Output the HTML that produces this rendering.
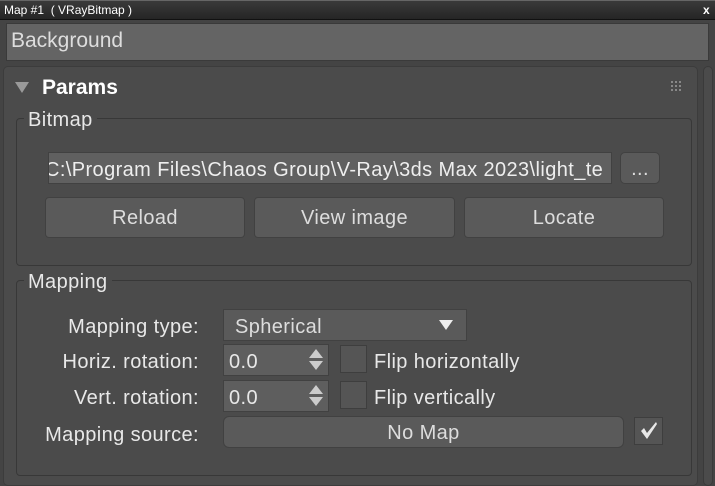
<!DOCTYPE html>
<html><head><style>
*{margin:0;padding:0;box-sizing:border-box}
body{width:715px;height:480px;background:#444;font-family:"Liberation Sans",sans-serif;color:#e8e8e8;position:relative;overflow:hidden}
.a{position:absolute}
.t{font-size:20px;letter-spacing:0.4px;white-space:nowrap;line-height:22px}
.btn{position:absolute;background:#5a5a5a;border:1px solid #414141;border-radius:4px;color:#ddd;font-size:20px;letter-spacing:0.4px;display:flex;align-items:center;justify-content:center;padding-top:2px}
.fld{position:absolute;background:#5e5e5e;border:1px solid #414141}
.grp{position:absolute;border:1px solid #383838;border-radius:4px}
.lbl{position:absolute;background:#4b4b4b;padding:0 4px}
.r{text-align:right;width:200px}
</style></head><body>
<div class="a" style="left:0;top:0;width:715px;height:20px;background:linear-gradient(#3a3a3a,#252525);border-top:1px solid #666;border-bottom:1px solid #111"></div>
<div class="a" style="left:4px;top:3px;font-size:12px;color:#fff;letter-spacing:0px">Map #1&nbsp; ( VRayBitmap )</div>
<div class="a" style="left:703px;top:3px;font-size:12px;color:#fff;font-weight:bold">x</div>
<div class="a" style="left:6px;top:23px;width:703px;height:38px;background:#646464;border:1px solid #3a3a3a"></div>
<div class="a t" style="left:11px;top:30px;font-size:21px;color:#ddd;letter-spacing:0">Background</div>
<div class="a" style="left:3px;top:66px;width:695px;height:420px;background:#4b4b4b;border:1px solid #3c3c3c;border-radius:5px"></div>
<div class="a" style="left:703px;top:66px;width:10px;height:420px;background:#4b4b4b;border:1px solid #3a3a3a;border-radius:5px"></div>
<svg class="a" style="left:15px;top:82px" width="14" height="12"><polygon points="0,0 14,0 7,11" fill="#9a9a9a"/></svg>
<div class="a" style="left:42px;top:76px;font-size:21px;font-weight:bold;color:#fff">Params</div>
<svg class="a" style="left:671px;top:81px" width="12" height="12" fill="#888"><rect x="0" y="0" width="2" height="2"/><rect x="4" y="0" width="2" height="2"/><rect x="8" y="0" width="2" height="2"/><rect x="0" y="4" width="2" height="2"/><rect x="4" y="4" width="2" height="2"/><rect x="8" y="4" width="2" height="2"/><rect x="0" y="8" width="2" height="2"/><rect x="4" y="8" width="2" height="2"/><rect x="8" y="8" width="2" height="2"/></svg>

<div class="grp" style="left:16px;top:118px;width:676px;height:148px"></div>
<div class="lbl t" style="left:24px;top:109px">Bitmap</div>
<div class="fld" style="left:48px;top:152px;width:564px;height:32px;background:#606060;overflow:hidden"><div class="t" style="position:absolute;left:-4px;top:6px;color:#eee">C:\Program Files\Chaos Group\V-Ray\3ds Max 2023\light_te</div></div>
<div class="btn" style="left:620px;top:152px;width:40px;height:32px;border-radius:5px">...</div>
<div class="btn" style="left:45px;top:197px;width:200px;height:41px">Reload</div>
<div class="btn" style="left:254px;top:197px;width:201px;height:41px">View image</div>
<div class="btn" style="left:464px;top:197px;width:200px;height:41px">Locate</div>

<div class="grp" style="left:16px;top:280px;width:676px;height:196px"></div>
<div class="lbl t" style="left:24px;top:271px">Mapping</div>
<div class="a t r" style="left:-1px;top:316px">Mapping type:</div>
<div class="fld" style="left:223px;top:309px;width:244px;height:32px;background:#5a5a5a"></div>
<div class="a t" style="left:235px;top:316px;color:#ddd">Spherical</div>
<svg class="a" style="left:439px;top:320px" width="14" height="11"><polygon points="0,0 14,0 7,10" fill="#eee"/></svg>

<div class="a t r" style="left:-1px;top:351px">Horiz. rotation:</div>
<div class="fld" style="left:223px;top:344px;width:106px;height:32px"></div>
<div class="a t" style="left:229px;top:351px">0.0</div>
<svg class="a" style="left:309px;top:349px" width="14" height="22" fill="#ccc"><polygon points="7,0 14,9 0,9"/><polygon points="0,12 14,12 7,21"/></svg>
<div class="fld" style="left:340px;top:345px;width:27px;height:28px;background:#555;border-color:#3e3e3e"></div>
<div class="a t" style="left:374px;top:351px">Flip horizontally</div>

<div class="a t r" style="left:-1px;top:387px">Vert. rotation:</div>
<div class="fld" style="left:223px;top:380px;width:106px;height:32px"></div>
<div class="a t" style="left:229px;top:387px">0.0</div>
<svg class="a" style="left:309px;top:385px" width="14" height="22" fill="#ccc"><polygon points="7,0 14,9 0,9"/><polygon points="0,12 14,12 7,21"/></svg>
<div class="fld" style="left:340px;top:381px;width:27px;height:28px;background:#555;border-color:#3e3e3e"></div>
<div class="a t" style="left:374px;top:387px">Flip vertically</div>

<div class="a t r" style="left:-1px;top:424px">Mapping source:</div>
<div class="btn" style="left:223px;top:416px;width:401px;height:32px;border-radius:6px">No Map</div>
<div class="fld" style="left:634px;top:417px;width:29px;height:28px;background:#555;border-color:#3e3e3e"></div>
<svg class="a" style="left:638px;top:420px" width="22" height="22"><path d="M3,11 L6,8 L9,13 L18,2 L19,4 L9,19 Z" fill="#e8e8e8"/></svg>
</body></html>
